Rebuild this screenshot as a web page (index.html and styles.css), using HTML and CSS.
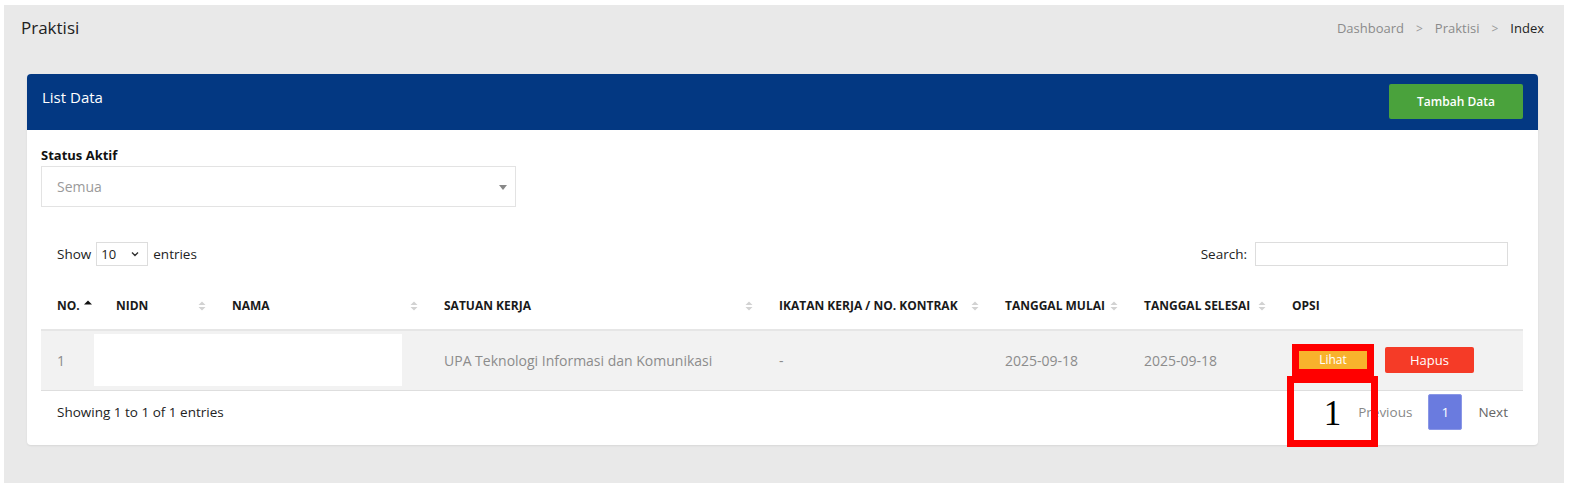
FILE: index.html
```html
<!DOCTYPE html>
<html lang="id">
<head>
<meta charset="utf-8">
<title>Praktisi</title>
<link rel="stylesheet" href="styles.css">
</head>
<body>
<div class="page">
  <div class="topbar">
    <h1 class="title">Praktisi</h1>
    <nav class="crumbs">
      <span class="crumb">Dashboard</span><span class="sep">&gt;</span><span class="crumb">Praktisi</span><span class="sep">&gt;</span><span class="crumb current">Index</span>
    </nav>
  </div>

  <div class="card">
    <div class="card-head">
      <div class="card-title">List Data</div>
      <button class="btn-add">Tambah Data</button>
    </div>
    <div class="card-body">
      <label class="field-label">Status Aktif</label>
      <div class="select-big">
        <span class="placeholder">Semua</span>
        <svg class="caret" width="8" height="5" viewBox="0 0 8 5"><path d="M0 0h8L4 5z" fill="#888"/></svg>
      </div>

      <div class="dt-top">
        <div class="length">Show
          <span class="select-small"><span>10</span>
            <svg width="8" height="6" viewBox="0 0 8 6"><path d="M1 1.5l3 3 3-3" fill="none" stroke="#333" stroke-width="1.4"/></svg>
          </span> entries</div>
        <div class="search">Search: <span class="search-input"></span></div>
      </div>

      <table class="dt">
        <colgroup>
          <col class="c-no"><col class="c-nidn"><col class="c-nama"><col class="c-satuan"><col class="c-ikatan"><col class="c-mulai"><col class="c-selesai"><col class="c-opsi">
        </colgroup>
        <thead>
          <tr>
            <th><div class="th-in">NO.<svg class="sort" width="8" height="10" viewBox="0 0 8 10"><path d="M0 5.5L4 1.5 8 5.5z" fill="#111"/></svg></div></th>
            <th><div class="th-in">NIDN<svg class="sort" width="8" height="10" viewBox="0 0 8 10"><path d="M0.5 4L4 0.5 7.5 4z M0.5 6L4 9.5 7.5 6z" fill="#d2d2d2"/></svg></div></th>
            <th><div class="th-in">NAMA<svg class="sort" width="8" height="10" viewBox="0 0 8 10"><path d="M0.5 4L4 0.5 7.5 4z M0.5 6L4 9.5 7.5 6z" fill="#d2d2d2"/></svg></div></th>
            <th><div class="th-in">SATUAN KERJA<svg class="sort" width="8" height="10" viewBox="0 0 8 10"><path d="M0.5 4L4 0.5 7.5 4z M0.5 6L4 9.5 7.5 6z" fill="#d2d2d2"/></svg></div></th>
            <th><div class="th-in">IKATAN KERJA / NO. KONTRAK<svg class="sort" width="8" height="10" viewBox="0 0 8 10"><path d="M0.5 4L4 0.5 7.5 4z M0.5 6L4 9.5 7.5 6z" fill="#d2d2d2"/></svg></div></th>
            <th><div class="th-in">TANGGAL MULAI<svg class="sort" width="8" height="10" viewBox="0 0 8 10"><path d="M0.5 4L4 0.5 7.5 4z M0.5 6L4 9.5 7.5 6z" fill="#d2d2d2"/></svg></div></th>
            <th><div class="th-in">TANGGAL SELESAI<svg class="sort" width="8" height="10" viewBox="0 0 8 10"><path d="M0.5 4L4 0.5 7.5 4z M0.5 6L4 9.5 7.5 6z" fill="#d2d2d2"/></svg></div></th>
            <th><div class="th-in">OPSI</div></th>
          </tr>
        </thead>
        <tbody>
          <tr>
            <td>1</td>
            <td colspan="2" class="redact-cell"><div class="redact"></div></td>
            <td>UPA Teknologi Informasi dan Komunikasi</td>
            <td>-</td>
            <td>2025-09-18</td>
            <td>2025-09-18</td>
            <td class="opsi"><span class="mark"><button class="btn-lihat">Lihat</button></span><button class="btn-hapus">Hapus</button></td>
          </tr>
        </tbody>
      </table>

      <div class="dt-bottom">
        <div class="info">Showing 1 to 1 of 1 entries</div>
        <div class="paging">
          <span class="pg-link">Previous</span>
          <span class="pg-cur">1</span>
          <span class="pg-link next">Next</span>
        </div>
      </div>
    </div>
    <div class="annot">1</div>
  </div>
</div>
</body>
</html>
```

FILE: styles.css
```css
* { box-sizing: border-box; }
html, body { margin: 0; padding: 0; background: #fff; }
body {
  font-family: "Open Sans", "DejaVu Sans", sans-serif;
  color: #333;
  width: 1569px;
  height: 492px;
  overflow: hidden;
}
.page {
  margin: 5px 5px 0 4px;
  width: 1560px;
  height: 478px;
  background: #e9e9e9;
  padding-top: 11px;
}
.topbar {
  display: flex;
  justify-content: space-between;
  align-items: center;
  padding: 0 20px 0 17px;
  height: 24px;
}
.title {
  margin: 0;
  font-size: 17px;
  font-weight: 400;
  color: #222;
  line-height: 24px;
}
.crumbs {
  display: flex;
  align-items: center;
  font-size: 13px;
  color: #8b8b8b;
}
.sep { margin: 0 12px; font-size: 12px; color: #999; }
.current { color: #222; }

.card {
  position: relative;
  margin: 34px 26px 0 23px;
  background: #fff;
  border-radius: 4px;
  box-shadow: 0 1px 2px rgba(0,0,0,0.08);
}
.card-head {
  height: 56px;
  background: #033882;
  border-radius: 4px 4px 0 0;
  display: flex;
  justify-content: space-between;
  align-items: flex-start;
  padding: 0 15px;
}
.card-title {
  color: #fff;
  font-size: 15px;
  line-height: 20px;
  margin-top: 13px;
}
.btn-add {
  margin-top: 10px;
  width: 134px;
  height: 35px;
  border: 0;
  border-radius: 2px;
  background: #4aa23c;
  color: #fff;
  font-family: inherit;
  font-size: 12px;
  font-weight: 600;
}
.card-body { padding: 15px 15px 15px 14px; }
.field-label {
  display: block;
  font-size: 13px;
  font-weight: 700;
  color: #111;
  line-height: 20px;
}
.select-big {
  margin-top: 1px;
  width: 475px;
  height: 41px;
  border: 1px solid #e3e3e3;
  display: flex;
  align-items: center;
  justify-content: space-between;
  padding: 0 8px 0 15px;
}
.placeholder { color: #9a9a9a; font-size: 14px; }
.caret { margin-top: 1px; }

.dt-top {
  margin-top: 35px;
  display: flex;
  justify-content: space-between;
  align-items: center;
  padding: 0 15px 0 16px;
  height: 24px;
  font-size: 13.5px;
  color: #222;
}
.length { display: flex; align-items: center; gap: 5px; }
.select-small {
  width: 52px;
  height: 24px;
  border: 1px solid #ddd;
  display: inline-flex;
  align-items: center;
  justify-content: space-between;
  padding: 0 8px 0 4px;
  font-size: 13px;
}
.search { display: flex; align-items: center; gap: 8px; }
.search-input {
  width: 253px;
  height: 24px;
  border: 1px solid #ddd;
}

.dt {
  margin-top: 16px;
  width: 1482px;
  border-collapse: collapse;
  table-layout: fixed;
}
.c-no { width: 59px; }
.c-nidn { width: 116px; }
.c-nama { width: 212px; }
.c-satuan { width: 335px; }
.c-ikatan { width: 226px; }
.c-mulai { width: 139px; }
.c-selesai { width: 148px; }
.c-opsi { width: 247px; }
.dt th {
  height: 48px;
  padding: 0 10px 0 16px;
  border-bottom: 2px solid #e6e6e6;
  font-size: 12px;
  font-weight: 700;
  color: #1a1a1a;
  text-align: left;
  white-space: nowrap;
}
.th-in {
  display: flex;
  justify-content: space-between;
  align-items: center;
}
.dt th:first-child { padding-right: 4px; }
.dt th:first-child .th-in { justify-content: flex-start; gap: 4px; }
.dt th:first-child .sort { margin-top: -3px; }
.dt tbody tr { background: #f2f2f2; }
.dt td {
  height: 60px;
  padding: 0 16px;
  border-bottom: 1px solid #dedede;
  font-size: 14px;
  color: #8c8c8c;
  white-space: nowrap;
}
.dt td.redact-cell { padding: 0; }
.redact {
  margin-left: -6px;
  width: 308px;
  height: 52px;
  background: #fff;
}
.mark {
  display: inline-block;
  border: 7px solid #ff0000;
  vertical-align: middle;
  line-height: 0;
}
.btn-lihat {
  width: 68px;
  height: 18px;
  border: 0;
  padding: 0;
  background: #f8b22c;
  color: #fff;
  font-family: inherit;
  font-size: 12px;
  line-height: 18px;
}
.btn-hapus {
  margin-left: 11px;
  width: 89px;
  height: 26px;
  border: 0;
  border-radius: 2px;
  background: #f53b27;
  color: #fff;
  font-family: inherit;
  font-size: 13px;
  vertical-align: middle;
}

.dt-bottom {
  display: flex;
  justify-content: space-between;
  align-items: center;
  padding: 3px 15px 0 16px;
}
.info { font-size: 13.5px; color: #222; }
.paging { display: flex; align-items: center; font-size: 13.5px; }
.pg-link { color: #888; }
.pg-link.next { color: #666; }
.pg-cur {
  margin: 0 16px;
  width: 34px;
  height: 36px;
  border-radius: 2px;
  background: #6a7bdf;
  border: 1px solid #8a97e6;
  color: #fff;
  display: flex;
  align-items: center;
  justify-content: center;
}

.annot {
  position: absolute;
  left: 1260px;
  top: 302px;
  width: 91px;
  height: 71px;
  border: 7px solid #ff0000;
  font-family: "Liberation Serif", "DejaVu Serif", serif;
  font-size: 35px;
  color: #000;
  display: flex;
  align-items: center;
  justify-content: center;
  padding-top: 4px;
}
```
